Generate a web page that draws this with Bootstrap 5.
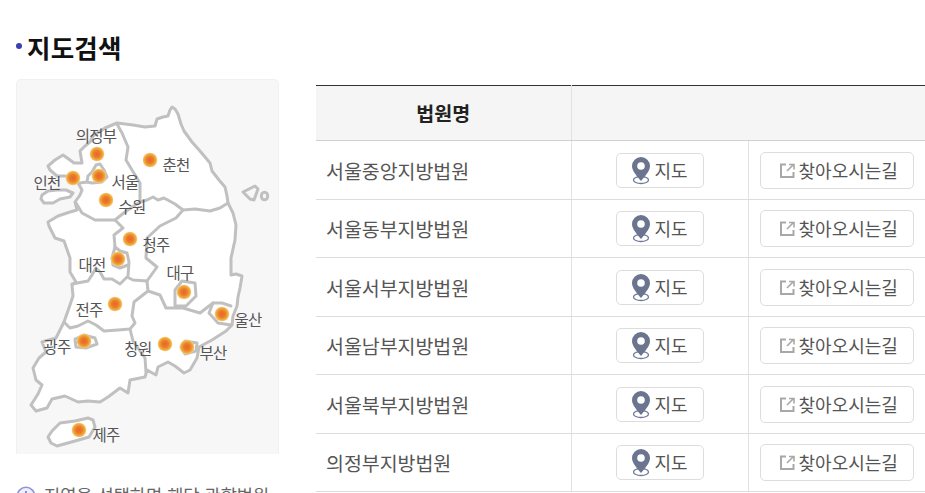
<!DOCTYPE html>
<html lang="ko"><head><meta charset="utf-8"><title>지도검색</title>
<link href="https://cdn.jsdelivr.net/npm/bootstrap@5.3.0/dist/css/bootstrap.min.css" rel="stylesheet">
<style>
html,body{height:493px;overflow:hidden}
body{font-family:"Noto Sans CJK KR","Noto Sans",sans-serif;color:#555;background:#fff}
.page-wrap{padding:29px 0 0 16px;width:925px}
.sec-title{font-size:25.5px;font-weight:700;line-height:36px;color:#111;margin:0 0 14px;letter-spacing:.2px;display:flex;align-items:center;gap:5px}
.sec-title::before{content:"";width:6px;height:6px;border-radius:50%;background:#3a3fb2;margin-top:-2px}
.map-col{width:263px;flex:none}
.map-panel{height:375px;background:#f7f7f7;border:1px solid #f0f0f0;border-bottom:0;border-radius:5px 5px 0 0;overflow:hidden}
.map-panel svg{display:block;margin:-1px}
.map-panel polyline,.map-panel polygon,.map-panel ellipse.isle{stroke:#c0c0c0;stroke-width:3;stroke-linejoin:round;stroke-linecap:round;fill:none}
.map-panel .land{fill:#fff}
.map-lines{filter:blur(.6px)}
.map-dots{filter:blur(.35px)}
.map-panel text{font-size:15.5px;fill:#555;text-anchor:middle;letter-spacing:-.7px;font-family:"Noto Sans CJK KR",sans-serif}
.map-note{margin-top:28px;font-size:17.6px;color:#666;line-height:26px;white-space:nowrap;gap:8px}
.map-note svg{flex:none;margin-top:4px}
.court-col{width:609px;margin-left:37px;flex:none;padding-top:56px}
.court-table{table-layout:fixed;width:609px;margin:0;border-top:1px solid #333;font-size:19.5px;color:#555}
.court-table th,.court-table td{padding:0;vertical-align:middle;border-bottom:1px solid #dcdcdc;color:#555;background:#fff;box-shadow:none}
.court-table thead th{height:55px;background:#f5f5f5;color:#222;font-size:19.5px;font-weight:700;text-align:center;border-bottom-color:#d0d0d0}
.court-table tbody tr{height:58.5px}
.court-table td.name{padding-left:10px;padding-top:1px;letter-spacing:-.05px}
.court-table .lined{border-left:1px solid #e2e2e2;padding-top:1px}
.map-btn,.route-btn{--bs-btn-color:#555;--bs-btn-border-color:#ddd;--bs-btn-hover-color:#555;--bs-btn-hover-border-color:#ccc;--bs-btn-padding-y:0;--bs-btn-padding-x:0;--bs-btn-font-size:18px;--bs-btn-border-radius:5px;display:inline-flex;align-items:center;justify-content:center;background:#fff}
.map-btn{width:88px;height:35px;gap:3px}
.route-btn{width:154px;height:37px;gap:3px;padding-left:3px}
</style></head>
<body>
<div class="page-wrap d-flex">
 <div class="map-col">
  <h2 class="sec-title">지도검색</h2>
  <div class="map-panel">
   <svg width="263" height="375" viewBox="16 79 263 375" xmlns="http://www.w3.org/2000/svg">
    <defs><radialGradient id="dot"><stop offset="0" stop-color="#e8662a"/><stop offset=".45" stop-color="#ea7c2a"/><stop offset=".82" stop-color="#f1ae3c"/><stop offset="1" stop-color="#f5d08c"/></radialGradient></defs>
    <g class="map-lines">
    <polygon class="land" points="170,110 172,107 175,109 178,114 181,124 184,131 192,142 200,151 210,163 212,171 219,180 225,187 227,196 228,203 233,213 236,225 235,240 231,258 231,275 236,274 242,276 240,288 238,297 237,306 233,316 232,325 226,331 212,340 199,347 197,358 190,370 184,373 175,366 168,362 158,367 156,375 147,370 145,377 130,380 128,393 120,388 108,397 100,402 88,401 78,402 65,396 52,399 47,408 36,411 31,405 38,394 42,385 36,380 33,368 39,358 46,352 42,342 56,338 60,330 64,322 70,305 73,296 72,285 76,282 70,272 70,258 64,241 55,238 49,226 48,222 58,216 70,212 77,210 75,202 80,195 82,190 78,183 66,176 57,176 50,170 48,166 55,160 63,155 70,160 74,163 82,163 80,151 85,146 90,142 93,136 105,128 117,123 133,125 145,127 155,126 157,119 163,117 168,116"/>
    <polygon class="land" points="42,195 48,191 57,190 66,190 73,193 70,197 60,199 53,203 44,203 41,199"/>
    <polyline points="117,124 122,133 128,147 126,160 132,170 140,183 140,202"/>
    <polyline points="140,202 147,200 153,197 158,200 164,198 175,204 183,210 195,209 210,211 220,208 228,203"/>
    <polyline points="76,203 82,213 95,220 105,220 115,220 125,212 140,202"/>
    <polyline points="115,220 123,228 114,235 115,247 120,251 127,253 129,262 128,276"/>
    <polyline points="115,247 112,258 113,265 120,268 128,265"/>
    <polyline points="72,284 88,281 92,275 96,268 100,272 104,279 112,279 120,284 127,277 133,280 147,281"/>
    <polyline points="147,281 157,267 146,258 147,238 160,226 176,218 183,210"/>
    <polyline points="147,281 148,291 134,302 132,316 135,323 130,329 118,330 104,331 96,325 88,321 78,326 70,328 64,322"/>
    <polyline points="130,329 133,341 145,358 146,372"/>
    <polyline points="148,291 160,295 166,308 183,308 200,313 213,303 222,303 231,306"/>
    <polygon points="175,306 175,290 182,281 195,283 196,296 186,306"/>
    <polyline points="213,303 209,313 218,323 231,325"/>
    <polygon points="185,341 197,343 196,351 185,354 181,347"/>
    <polygon points="75,339 84,335 95,338 97,344 86,348 76,347"/>
    <polygon points="92,172 96,165 100,164 104,170 107,177 102,182 92,183 87,182 88,176"/>
    <polyline points="80,183 87,182"/>
    <polygon class="land" points="48,437 52,431 60,423 75,421 88,418 93,420 95,427 89,437 75,441 57,446 51,443"/>
    <polygon points="243,192 255,186 258,189 254,200 250,199"/>
    <ellipse class="isle" cx="264.500" cy="196" rx="3.200" ry="3.800"/>
    </g>
    <g class="map-dots" fill="url(#dot)">
     <circle cx="97" cy="154" r="7.300"/><circle cx="150" cy="160" r="7.300"/><circle cx="73" cy="178" r="7.300"/><circle cx="99" cy="176" r="7.300"/><circle cx="106" cy="200" r="7.300"/><circle cx="130" cy="239" r="7.300"/><circle cx="118" cy="259" r="7.300"/><circle cx="184" cy="292" r="7.300"/><circle cx="115" cy="304" r="7.300"/><circle cx="222" cy="314" r="7.300"/><circle cx="84" cy="341" r="7.300"/><circle cx="165" cy="344" r="7.300"/><circle cx="187" cy="347" r="7.300"/><circle cx="79" cy="430" r="7.300"/>
    </g>
    <text x="96" y="142">의정부</text><text x="176" y="171">춘천</text><text x="47" y="189">인천</text><text x="125" y="188">서울</text><text x="132" y="213">수원</text><text x="156" y="251">청주</text><text x="92" y="271">대전</text><text x="180" y="279">대구</text><text x="89" y="316">전주</text><text x="248" y="326">울산</text><text x="57" y="353">광주</text><text x="138" y="355">창원</text><text x="213" y="359">부산</text><text x="106" y="441">제주</text>
   </svg>
  </div>
  <div class="map-note d-flex align-items-start"><svg width="20" height="20" viewBox="0 0 20 20"><circle cx="10" cy="10" r="8.700" fill="#eef0fb" stroke="#8d94dc" stroke-width="1.600"/><path d="M10 5v6" stroke="#6e76cc" stroke-width="1.600"/></svg><span>지역을 선택하면 해당 관할법원</span></div>
 </div>
 <div class="court-col">
  <table class="table court-table">
   <colgroup><col style="width:255px"><col style="width:177px"><col style="width:177px"></colgroup>
   <thead><tr><th>법원명</th><th colspan="2" class="lined"></th></tr></thead>
   <tbody id="courts"></tbody>
  </table>
 </div>
</div>
<script>
const pin='<svg width="20" height="29" viewBox="0 0 20 29"><ellipse cx="10" cy="24" rx="7.500" ry="3.500" fill="none" stroke="#6f7a96" stroke-width="1.300"/><path d="M10 1a9 9 0 0 1 9 9c0 5-5 10-9 15C6 20 1 15 1 10a9 9 0 0 1 9-9z" fill="#6b7590"/><circle cx="10" cy="10" r="3.800" fill="#fff"/></svg>';
const ext='<svg width="17" height="17" viewBox="0 0 17 17" fill="none" stroke="#a8a8a8" stroke-width="2"><path d="M7 2.500H2v12.500h12.500V10"/><path d="M8 9l6-6M10 2.500h5v5" stroke-width="1.600"/></svg>';
document.getElementById('courts').innerHTML=['서울중앙지방법원','서울동부지방법원','서울서부지방법원','서울남부지방법원','서울북부지방법원','의정부지방법원'].map(n=>`<tr><td class="name">${n}</td><td class="lined text-center"><a href="#" class="btn map-btn">${pin}<span>지도</span></a></td><td class="lined text-center"><a href="#" class="btn route-btn">${ext}<span>찾아오시는길</span></a></td></tr>`).join('');
</script>
<script src="https://cdn.jsdelivr.net/npm/bootstrap@5.3.0/dist/js/bootstrap.bundle.min.js"></script>
</body></html>
